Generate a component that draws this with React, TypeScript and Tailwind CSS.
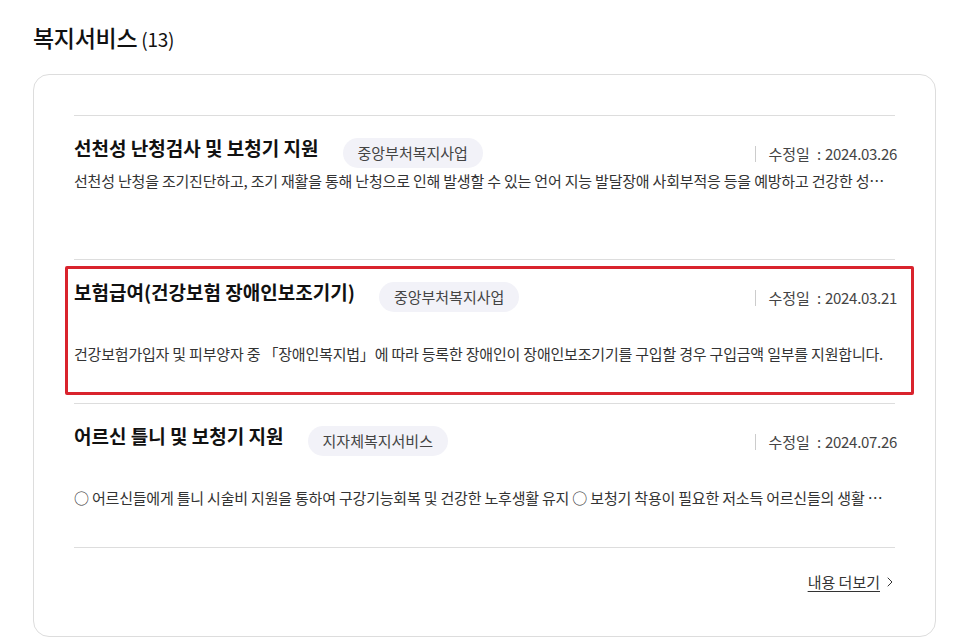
import { ChevronRight } from "lucide-react"

type Service = {
    title: string
    tag: string
    date: string
    desc: string
    highlight?: boolean
    tight?: boolean
}

const services: Service[] = [
    {
        title: "선천성 난청검사 및 보청기 지원",
        tag: "중앙부처복지사업",
        date: "2024.03.26",
        desc: "선천성 난청을 조기진단하고, 조기 재활을 통해 난청으로 인해 발생할 수 있는 언어 지능 발달장애 사회부적응 등을 예방하고 건강한 성장을 돕기 위해 지원합니다.",
        tight: true,
    },
    {
        title: "보험급여(건강보험 장애인보조기기)",
        tag: "중앙부처복지사업",
        date: "2024.03.21",
        desc: "건강보험가입자 및 피부양자 중 「장애인복지법」에 따라 등록한 장애인이 장애인보조기기를 구입할 경우 구입금액 일부를 지원합니다.",
        highlight: true,
    },
    {
        title: "어르신 틀니 및 보청기 지원",
        tag: "지자체복지서비스",
        date: "2024.07.26",
        desc: "○ 어르신들에게 틀니 시술비 지원을 통하여 구강기능회복 및 건강한 노후생활 유지 ○ 보청기 착용이 필요한 저소득 어르신들의 생활 불편 해소를 위해 지원합니다.",
    },
]

const ServiceItem = ({ item }: { item: Service }) => {
    return (
        <li className="relative border-b border-[#dddddd] pt-[18px] h-[144px]">
            {item.highlight && (
                <div className="absolute top-[6px] bottom-[8px] -left-[9px] -right-[19px] border-[3px] border-[#d9232d] rounded-[2px] pointer-events-none" />
            )}
            <div className="flex items-start">
                <h3 className="text-[19px] leading-[28px] font-bold text-[#111111]">
                    {item.title}
                </h3>
                <span className="ml-6 mt-[4px] h-[30px] px-[15px] rounded-full bg-[#f2f2f8] text-[15px] leading-[30px] text-[#444444]">
                    {item.tag}
                </span>
                <div className="ml-auto mt-[12px] flex items-center h-[16px] border-l border-[#cccccc] pl-3 text-[15px] text-[#444444] -mr-[2px]">
                    <span>수정일</span>
                    <span className="ml-[7px]">:</span>
                    <span className="ml-[4px] tracking-[-0.3px]">{item.date}</span>
                </div>
            </div>
            <p
                className={`${item.tight ? "mt-[1px]" : "mt-[30px]"} text-[15px] leading-[24px] text-[#333333] truncate tracking-[-0.2px]`}>
                {item.desc}
            </p>
        </li>
    )
}

const App = () => {
    return (
        <div
            className="min-h-[644px] bg-white pl-[33px] pr-[17px] pt-[22px] pb-2"
            style={{ fontFamily: '"Noto Sans CJK KR", "Noto Sans", sans-serif' }}>
            <h2 className="flex items-baseline text-[23px] leading-[30px] font-medium text-[#111111] tracking-[-0.3px]">
                복지서비스
                <span className="ml-[4px] text-[19px] font-normal">(13)</span>
            </h2>

            <div className="mt-[20px] border border-[#dddddd] rounded-[16px] px-10 pt-10 pb-[42px]">
                <ul className="border-t border-[#dddddd]">
                    {services.map((s) => (
                        <ServiceItem key={s.title} item={s} />
                    ))}
                </ul>
                <div className="flex justify-end items-center mt-[22px] h-[24px] text-[15px] text-[#333333]">
                    <a href="#" className="underline underline-offset-[3px]">
                        내용 더보기
                    </a>
                    <ChevronRight className="w-4 h-4 ml-[2px] -mr-[3px]" strokeWidth={1.5} />
                </div>
            </div>
        </div>
    )
}

export default App
